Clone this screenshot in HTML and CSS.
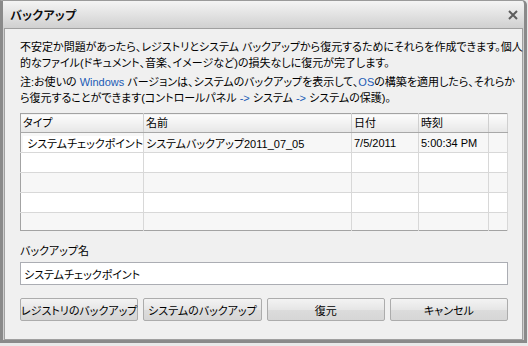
FILE: index.html
```html
<!DOCTYPE html>
<html lang="ja">
<head>
    <meta charset="UTF-8">
    <title>バックアップ</title>
    <link rel="stylesheet" href="styles.css">
</head>
<body>
    <div class="window">
        <div class="titlebar">
            <span class="title">バックアップ</span>
            <svg class="close" width="10" height="10" viewBox="0 0 10 10">
                <path d="M1 1 L9 9 M9 1 L1 9" stroke="#5c5c5c" stroke-width="2" fill="none"/>
            </svg>
        </div>

        <div class="panel">
            <p class="intro">不安定か問題があったら、レジストリとシステム バックアップから復元するためにそれらを作成できます。個人<br>的なファイル(ドキュメント、音楽、イメージなど)の損失なしに復元が完了します。</p>
            <p class="intro">注:お使いの <span class="hl">Windows</span> バージョンは、システムのバックアップを表示して、<span class="hl">OS</span>の構築を適用したら、それらか<br>ら復元することができます(コントロールパネル <span class="hl">-&gt;</span> システム <span class="hl">-&gt;</span> システムの保護)。</p>

            <table class="grid">
                <colgroup>
                    <col class="c-type">
                    <col class="c-name">
                    <col class="c-date">
                    <col class="c-time">
                    <col>
                </colgroup>
                <thead>
                    <tr>
                        <th>タイプ</th>
                        <th>名前</th>
                        <th>日付</th>
                        <th>時刻</th>
                        <th></th>
                    </tr>
                </thead>
                <tbody>
                    <tr>
                        <td><span class="focus">システムチェックポイント</span></td>
                        <td>システムバックアップ2011_07_05</td>
                        <td>7/5/2011</td>
                        <td>5:00:34 PM</td>
                        <td></td>
                    </tr>
                    <tr><td></td><td></td><td></td><td></td><td></td></tr>
                    <tr><td></td><td></td><td></td><td></td><td></td></tr>
                    <tr><td></td><td></td><td></td><td></td><td></td></tr>
                    <tr class="last"><td></td><td></td><td></td><td></td><td></td></tr>
                </tbody>
            </table>

            <label class="field-label" for="backupName">バックアップ名</label>
            <input id="backupName" class="field" type="text" value="システムチェックポイント">

            <div class="buttons">
                <button>レジストリのバックアップ</button>
                <button>システムのバックアップ</button>
                <button>復元</button>
                <button>キャンセル</button>
            </div>
        </div>
    </div>
</body>
</html>
```

FILE: styles.css
```css
* {
    margin: 0;
    padding: 0;
    box-sizing: border-box;
}

body {
    width: 528px;
    height: 346px;
    background: #e9e9e9;
    font-family: 'Liberation Sans', 'Noto Sans CJK JP', sans-serif;
    font-size: 11px;
    font-feature-settings: "palt";
    color: #000;
    overflow: hidden;
}

.window {
    width: 527px;
    height: 343px;
    background: linear-gradient(#f4f4f4, #cfcfcf 28px, #cfcfcf);
    border: 3px solid #8a8a8a;
    border-top: 1px solid #9a9a9a;
    border-radius: 0 5px 0 0;
    display: flex;
    flex-direction: column;
}

.titlebar {
    height: 27px;
    display: flex;
    align-items: center;
    justify-content: space-between;
    padding: 0 6px 0 7px;
}

.title {
    font-weight: bold;
    font-size: 12px;
    letter-spacing: 0.2px;
    color: #111;
    text-shadow: 0 0 1px #fff;
}

.close {
    margin-top: 1px;
}

.panel {
    flex: 1;
    background: #f0f0f0;
    border: 1px solid #a0a0a0;
    margin: 0 1px;
    padding: 10px 12px 0 15px;
}

.intro {
    line-height: 16px;
    white-space: nowrap;
    margin-bottom: 3px;
}

.hl {
    color: #1c5bb5;
}

.grid {
    margin-top: 7px;
    width: 488px;
    border-collapse: collapse;
    table-layout: fixed;
    border: 1px solid #a3a3a3;
    background: #fff;
}

.c-type { width: 123px; }
.c-name { width: 208px; }
.c-date { width: 67px; }
.c-time { width: 70px; }

.grid th {
    height: 19px;
    text-align: left;
    font-weight: normal;
    padding: 0 2px;
    background: linear-gradient(#fdfdfd, #e6e6e6);
    border-right: 1px solid #cfcfcf;
    border-bottom: 1px solid #a8a8a8;
    line-height: 16px;
}

.grid td {
    height: 20px;
    padding: 0 2px;
    border-right: 1px solid #d8d8d8;
    border-bottom: 1px solid #d8d8d8;
    white-space: nowrap;
    overflow: hidden;
}

.grid tbody tr:nth-child(odd) td {
    background: #f7f7f7;
}

.grid tr.last td {
    height: 18px;
    border-bottom: none;
}

.focus {
    background: #fff;
    padding: 2px 4px;
}

.field-label {
    display: block;
    margin-top: 12px;
    line-height: 16px;
}

.field {
    display: block;
    margin-top: 3px;
    width: 488px;
    height: 23px;
    border: 1px solid #abadb3;
    background: #fff;
    padding: 0 3px;
    font: inherit;
    font-feature-settings: "palt";
    color: #000;
}

.buttons {
    margin-top: 13px;
    width: 488px;
    display: grid;
    grid-template-columns: repeat(4, 1fr);
    gap: 5px;
}

button {
    height: 23px;
    border: 1px solid #acacac;
    border-radius: 2px;
    background: linear-gradient(#f3f3f3, #e6e6e6 50%, #dcdcdc 51%, #d6d6d6);
    font: inherit;
    font-feature-settings: "palt";
    white-space: nowrap;
    color: #000;
}
```
